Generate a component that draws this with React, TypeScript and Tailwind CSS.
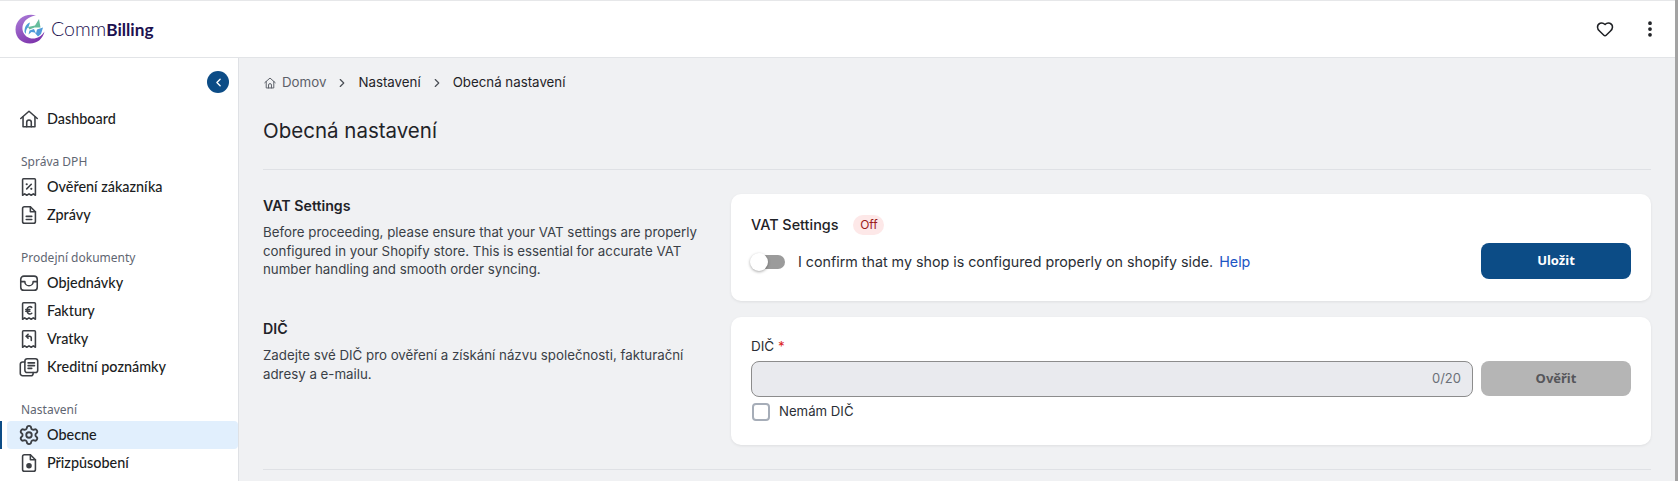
import React from 'react';
import { ChevronLeft, ChevronRight, EllipsisVertical, Heart, Settings } from 'lucide-react';

type IconProps = { className?: string };

const iconBase = {
  viewBox: '0 0 24 24',
  fill: 'none',
  stroke: 'currentColor',
  strokeWidth: 1.7,
  strokeLinecap: 'round' as const,
  strokeLinejoin: 'round' as const,
};

const receiptOutline = 'M6 3h12a1 1 0 0 1 1 1V21l-2.300-1.500-2.300 1.500-2.400-1.500-2.400 1.500-2.300-1.500L5 21V4a1 1 0 0 1 1-1z';

function HomeIcon({ className }: IconProps) {
  return (
    <svg {...iconBase} className={className}>
      <path d="M3 11.500 12 3.500l9 8" />
      <path d="M5.500 9.500V20.500h13V9.500" />
      <path d="M9.500 20.500v-5a2.500 2.500 0 0 1 5 0v5" />
    </svg>
  );
}

function TaxReceiptIcon({ className }: IconProps) {
  return (
    <svg {...iconBase} className={className}>
      <path d={receiptOutline} />
      <path d="m9.500 14 5-5" />
      <path d="M9.500 9h.01M14.500 14h.01" strokeWidth={2.400} />
    </svg>
  );
}

function FileIcon({ className }: IconProps) {
  return (
    <svg {...iconBase} className={className}>
      <path d="M13.500 3H7a2 2 0 0 0-2 2v14a2 2 0 0 0 2 2h10a2 2 0 0 0 2-2V8.500z" />
      <path d="M13.500 3v5.500H19" />
      <path d="M9 13.500h6M9 17h6" />
    </svg>
  );
}

function InboxIcon({ className }: IconProps) {
  return (
    <svg {...iconBase} className={className}>
      <rect x="3" y="4.500" width="18" height="15.500" rx="3.500" />
      <path d="M3 10.500h4.500a4.500 4.500 0 0 0 9 0H21" />
    </svg>
  );
}

function EuroReceiptIcon({ className }: IconProps) {
  return (
    <svg {...iconBase} className={className}>
      <path d={receiptOutline} />
      <path d="M15 8a3 3 0 0 0-5 2.200v2.100a3 3 0 0 0 5 2.200M8.500 10.300h4.500M8.500 12.300h4.500" />
    </svg>
  );
}

function ReturnReceiptIcon({ className }: IconProps) {
  return (
    <svg {...iconBase} className={className}>
      <path d={receiptOutline} />
      <path d="M11 7 9 9l2 2" />
      <path d="M9 9h3.500a2 2 0 0 1 2 2v2.500" />
    </svg>
  );
}

function NotesIcon({ className }: IconProps) {
  return (
    <svg {...iconBase} className={className}>
      <rect x="7.500" y="3" width="14" height="15" rx="2.500" />
      <path d="M11 7.500h7M11 10.500h7M11 13.500h4" />
      <path d="M7.500 6.500H5A2.500 2.500 0 0 0 2.500 9v10A2.500 2.500 0 0 0 5 21.500h9a2.500 2.500 0 0 0 2.500-2.500v-1" />
    </svg>
  );
}

function FileGearIcon({ className }: IconProps) {
  return (
    <svg {...iconBase} className={className}>
      <path d="M13.500 3H7a2 2 0 0 0-2 2v14a2 2 0 0 0 2 2h10a2 2 0 0 0 2-2V8.500z" />
      <path d="M13.500 3v5.500H19" />
      <circle cx="12" cy="15" r="2.200" fill="currentColor" />
    </svg>
  );
}

function Logo() {
  return (
    <svg viewBox="0 0 30 30" className="h-[30px] w-[30px] shrink-0">
      <defs>
        <linearGradient id="logoRing" x1="0.200" y1="0" x2="0.800" y2="1">
          <stop offset="0" stopColor="#a878d6" />
          <stop offset="1" stopColor="#7a2fa8" />
        </linearGradient>
      </defs>
      <path
        d="M21 1.500C11 -1.500 0.500 5 0.500 15.500C0.500 24 7 29.500 15 29.500C22.500 29.500 28 24.500 29.500 17.500C26 23 20 26 14.500 24C8 21.500 5.500 14.500 9 8.500C11.500 4.500 16 2 21 1.500z"
        fill="url(#logoRing)"
      />
      <path d="M9.500 18C9.500 13 11.500 9.500 15 8.500L13.500 13C11.500 14.500 10.500 17 11 20z" fill="#4e9fd6" />
      <path d="M13 13 20 11.500 24 5 25.500 13.500 19.500 13.500 14.500 15.500z" fill="#66bd9c" />
      <path d="M13.500 20.500 14.500 16.500 19 15 21 19.500 22 15.500 28 13.500 26 20 23 22.500 19.500 18.500 16.500 18z" fill="#4f9bd9" />
    </svg>
  );
}

function NavItem({ icon: Icon, label, active }: { icon: React.ComponentType<IconProps>; label: string; active?: boolean }) {
  return (
    <div className="relative h-7 pl-[7px]">
      {active && <div className="absolute left-0 top-0 h-7 w-[2px] bg-[#0c4c86]" />}
      <div className={`flex h-7 items-center gap-[7px] rounded-[4px] pl-[11px] ${active ? 'bg-[#e1effd]' : ''}`}>
        <Icon className="h-[22px] w-[22px] shrink-0 text-[#3c3f44]" />
        <span className="text-[14.400px] font-medium leading-none text-[#1b1d22]">{label}</span>
      </div>
    </div>
  );
}

function GroupTitle({ children }: { children: React.ReactNode }) {
  return <div className="flex h-6 items-center pl-[21px] pt-[2px] font-['Noto_Sans',sans-serif] text-[12px] text-[#5f6672]">{children}</div>;
}

function SettingsBlurb({ title, children }: { title: string; children: React.ReactNode }) {
  return (
    <div className="w-[440px] shrink-0 pt-[2px]">
      <h3 className="text-[14.200px] font-semibold leading-[20px] text-[#1f2328]">{title}</h3>
      <p className="mt-[7px] text-[13.300px] leading-[18.500px] text-[#3a3f47]">{children}</p>
    </div>
  );
}

export default function App() {
  return (
    <div className="flex h-[481px] w-[1678px] overflow-hidden bg-[#f0f1f3] font-['Inter',sans-serif]">
      <div className="flex min-w-0 flex-1 flex-col">
        <header className="flex h-[58px] shrink-0 items-center justify-between border-y border-t-[#e6e7e9] border-b-[#e2e4e7] bg-white pl-[15px] pr-[15px]">
          <div className="flex items-center gap-[6px]">
            <Logo />
            <span className="font-['Lato',sans-serif] text-[19.500px] leading-none text-[#1c1150]">
              <span className="font-light">Comm</span>
              <span className="text-[17.200px] font-bold">Billing</span>
            </span>
          </div>
          <div className="flex items-center gap-[26px]">
            <Heart className="h-[18px] w-[18px] text-[#1d1f23]" strokeWidth={2} />
            <EllipsisVertical className="h-5 w-5 text-[#1d1f23]" strokeWidth={2.500} />
          </div>
        </header>

        <div className="flex min-h-0 flex-1">
          <aside className="relative w-[239px] shrink-0 border-r border-[#dfe1e5] bg-white pt-[47px] font-['Lato',sans-serif]">
            <button className="absolute left-[207px] top-[13px] flex h-[22px] w-[22px] items-center justify-center rounded-full bg-[#0c4c86] text-white">
              <ChevronLeft className="h-[13px] w-[13px]" strokeWidth={2.500} />
            </button>
            <NavItem icon={HomeIcon} label="Dashboard" />
            <div className="mt-4">
              <GroupTitle>Správa DPH</GroupTitle>
              <NavItem icon={TaxReceiptIcon} label="Ověření zákazníka" />
              <NavItem icon={FileIcon} label="Zprávy" />
            </div>
            <div className="mt-4">
              <GroupTitle>Prodejní dokumenty</GroupTitle>
              <NavItem icon={InboxIcon} label="Objednávky" />
              <NavItem icon={EuroReceiptIcon} label="Faktury" />
              <NavItem icon={ReturnReceiptIcon} label="Vratky" />
              <NavItem icon={NotesIcon} label="Kreditní poznámky" />
            </div>
            <div className="mt-4">
              <GroupTitle>Nastavení</GroupTitle>
              <NavItem icon={Settings} label="Obecne" active />
              <NavItem icon={FileGearIcon} label="Přizpůsobení" />
            </div>
          </aside>

          <main className="min-w-0 flex-1 px-[24px] pt-[15px]">
            <nav className="flex h-[20px] items-center text-[13.300px] text-[#1f2328]">
              <HomeIcon className="h-[14px] w-[14px] text-[#5c6068]" />
              <span className="ml-[5px] text-[#5c6068]">Domov</span>
              <ChevronRight className="mx-[9px] h-[14px] w-[14px] text-[#4a4e55]" />
              <span>Nastavení</span>
              <ChevronRight className="mx-[9px] h-[14px] w-[14px] text-[#4a4e55]" />
              <span>Obecná nastavení</span>
            </nav>
            <h1 className="mt-[24px] text-[20.500px] font-normal leading-[28px] text-[#1f2328]">Obecná nastavení</h1>
            <div className="mt-[24px] border-t border-[#dfe1e5]" />

            <div className="mt-[24px] flex gap-[28px]">
              <SettingsBlurb title="VAT Settings">
                Before proceeding, please ensure that your VAT settings are properly configured in your Shopify store. This is essential for accurate VAT number handling and smooth order syncing.
              </SettingsBlurb>
              <section className="flex h-[107px] flex-1 justify-between rounded-[10px] bg-white pl-[20px] pr-[20px] pt-[21px] shadow-[0_1px_3px_rgba(0,0,0,0.08)]">
                <div>
                  <div className="flex h-5 items-center gap-[15px]">
                    <span className="text-[14.400px] font-medium text-[#1f2328]">VAT Settings</span>
                    <span className="flex h-5 w-[31px] items-center justify-center rounded-full bg-[#fde8e8] text-[12px] text-[#9b1c1c]">Off</span>
                  </div>
                  <div className="mt-[17px] flex h-5 items-center">
                    <div className="relative h-[14px] w-[34px] rounded-full bg-[#9b9b9b]">
                      <div className="absolute -top-[2px] -left-[1px] h-[18px] w-[18px] rounded-full bg-white shadow-[0_1px_3px_rgba(0,0,0,0.35)]" />
                    </div>
                    <span className="ml-[13px] text-[14.270px] text-[#2a2e35]">I confirm that my shop is configured properly on shopify side.</span>
                    <span className="ml-[6px] text-[14.270px] text-[#1c55c4]">Help</span>
                  </div>
                </div>
                <button className="mt-[28px] h-9 w-[150px] rounded-[8px] bg-[#0c4c86] font-['Noto_Sans',sans-serif] text-[13px] font-bold text-white">Uložit</button>
              </section>
            </div>

            <div className="mt-[16px] flex gap-[28px]">
              <SettingsBlurb title="DIČ">
                Zadejte své DIČ pro ověření a získání názvu společnosti, fakturační adresy a e-mailu.
              </SettingsBlurb>
              <section className="h-[128px] flex-1 rounded-[10px] bg-white px-[20px] pt-[19px] shadow-[0_1px_3px_rgba(0,0,0,0.08)]">
                <label className="block text-[13.500px] leading-[20px] text-[#2a2e35]">
                  DIČ <span className="text-[#dc2626]">*</span>
                </label>
                <div className="mt-[5px] flex gap-[8px]">
                  <div className="flex h-9 flex-1 items-center justify-end rounded-[8px] border border-[#8c8c8c] bg-[#e9eaee] pr-[11px] text-[13px] text-[#6b7078]">0/20</div>
                  <button className="h-[35px] w-[150px] rounded-[8px] bg-[#b5b5b5] font-['Noto_Sans',sans-serif] text-[13px] font-bold text-[#55565a]">Ověřit</button>
                </div>
                <div className="mt-[5px] flex items-center gap-[9px] pl-[1px]">
                  <div className="h-[18px] w-[18px] rounded-[4px] border-2 border-[#a6adb8] bg-white" />
                  <span className="text-[13.200px] text-[#2a2e35]">Nemám DIČ</span>
                </div>
              </section>
            </div>
            <div className="mt-[24px] border-t border-[#dfe1e5]" />
          </main>
        </div>
      </div>
      <div className="w-[3px] shrink-0 bg-[#a3a3a3]" />
    </div>
  );
}
